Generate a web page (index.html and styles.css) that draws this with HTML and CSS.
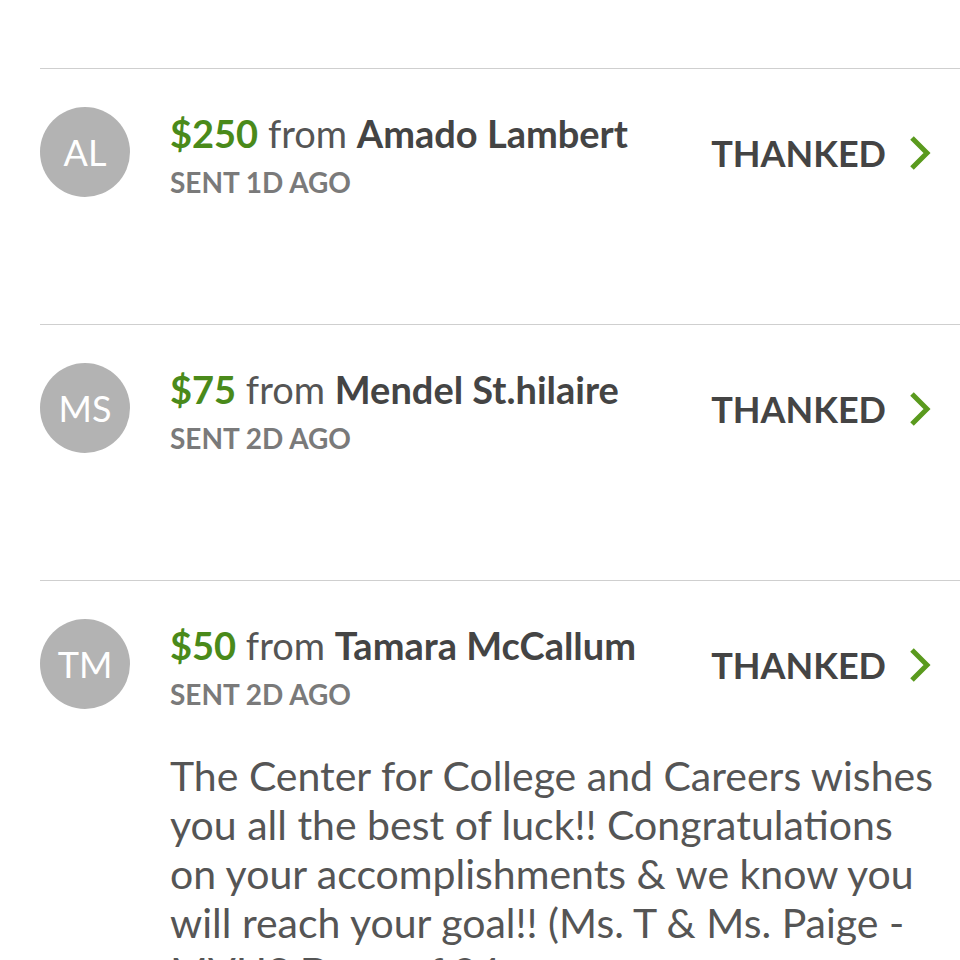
FILE: index.html
```html
<!DOCTYPE html>
<html lang="en">
<head>
    <meta charset="UTF-8">
    <meta name="viewport" content="width=device-width, initial-scale=1.0">
    <title>Donations</title>
    <link rel="stylesheet" href="styles.css">
</head>
<body>

    <div class="donation-list">
        <div class="donation">
            <div class="donation-head">
                <div class="avatar">AL</div>
                <div class="info">
                    <div class="title"><span class="amount">$250</span> from <span class="name">Amado Lambert</span></div>
                    <div class="sent">SENT 1D AGO</div>
                </div>
                <a class="status" href="#">THANKED
                    <svg class="chevron" viewBox="0 0 24 36" width="24" height="36"><path d="M4 3 L19 18 L4 33" fill="none" stroke="#5a9a1e" stroke-width="5"/></svg>
                </a>
            </div>
        </div>

        <div class="donation">
            <div class="donation-head">
                <div class="avatar">MS</div>
                <div class="info">
                    <div class="title"><span class="amount">$75</span> from <span class="name">Mendel St.hilaire</span></div>
                    <div class="sent">SENT 2D AGO</div>
                </div>
                <a class="status" href="#">THANKED
                    <svg class="chevron" viewBox="0 0 24 36" width="24" height="36"><path d="M4 3 L19 18 L4 33" fill="none" stroke="#5a9a1e" stroke-width="5"/></svg>
                </a>
            </div>
        </div>

        <div class="donation">
            <div class="donation-head">
                <div class="avatar">TM</div>
                <div class="info">
                    <div class="title"><span class="amount">$50</span> from <span class="name">Tamara McCallum</span></div>
                    <div class="sent">SENT 2D AGO</div>
                </div>
                <a class="status" href="#">THANKED
                    <svg class="chevron" viewBox="0 0 24 36" width="24" height="36"><path d="M4 3 L19 18 L4 33" fill="none" stroke="#5a9a1e" stroke-width="5"/></svg>
                </a>
            </div>
            <p class="message">The Center for College and Careers wishes you all the best of luck!! Congratulations on your accomplishments &amp; we know you will reach your goal!! (Ms. T &amp; Ms. Paige - MVHS Dean of 94</p>
        </div>
    </div>

</body>
</html>
```

FILE: styles.css
```css
body {
    font-family: Lato, "Open Sans", sans-serif;
    margin: 0;
    background-color: white;
    color: #555;
    overflow: hidden;
}
.donation-list {
    padding-top: 68px;
    margin-left: 40px;
}
.donation {
    border-top: 1px solid #cfcfcf;
    height: 256px;
    padding-top: 38px;
    box-sizing: border-box;
}
.donation:last-child {
    height: auto;
}
.donation-head {
    display: flex;
    align-items: flex-start;
    padding-right: 28px;
}
.avatar {
    width: 90px;
    height: 90px;
    border-radius: 50%;
    background-color: #b3b3b3;
    color: white;
    font-size: 36px;
    display: flex;
    align-items: center;
    justify-content: center;
    flex-shrink: 0;
}
.info {
    flex: 1;
    margin-left: 40px;
    margin-top: 6px;
}
.title {
    font-size: 38px;
    line-height: 40px;
    color: #555;
}
.amount {
    color: #4a8a1a;
    font-weight: bold;
}
.name {
    font-weight: bold;
    color: #444;
}
.sent {
    font-size: 28px;
    font-weight: bold;
    color: #7a7a7a;
    line-height: 34px;
    margin-top: 12px;
}
.status {
    align-self: center;
    display: flex;
    align-items: center;
    gap: 22px;
    font-size: 36px;
    font-weight: bold;
    color: #444;
    text-decoration: none;
}
.message {
    margin: 40px 20px 0 130px;
    font-size: 41px;
    line-height: 49px;
    color: #555;
}
```
